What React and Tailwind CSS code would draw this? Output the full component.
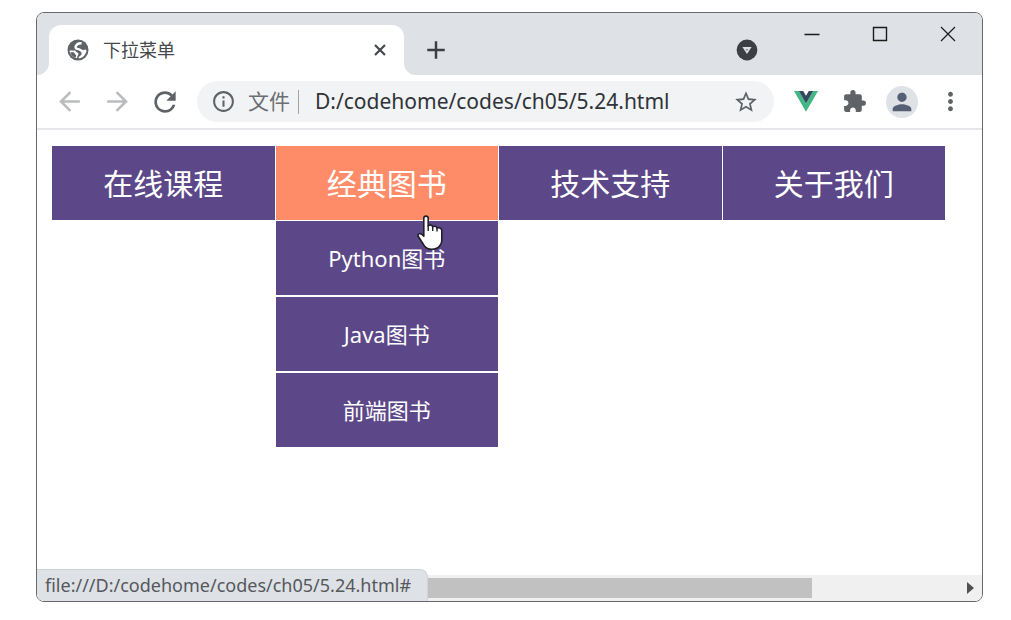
import React from "react";
import {
  MdAdd,
  MdArrowBack,
  MdArrowForward,
  MdExtension,
  MdInfoOutline,
  MdMoreVert,
  MdPerson,
  MdRefresh,
  MdStarBorder,
} from "react-icons/md";

const menu = [
  { label: "在线课程" },
  { label: "经典图书", active: true, children: ["Python图书", "Java图书", "前端图书"] },
  { label: "技术支持" },
  { label: "关于我们" },
];

function IconButton({ label, children, className = "" }) {
  return (
    <button
      type="button"
      aria-label={label}
      className={`flex size-8 shrink-0 items-center justify-center rounded-full text-[#5f6368] ${className}`}
    >
      {children}
    </button>
  );
}

function CaptionButton({ label, children }) {
  return (
    <button type="button" aria-label={label} className="flex h-[42px] w-17 items-center justify-center text-[#1b1b1b]">
      <svg viewBox="0 0 16 16" className="size-4" fill="none" stroke="currentColor" aria-hidden="true">
        {children}
      </svg>
    </button>
  );
}

function GlobeIcon() {
  return (
    <svg viewBox="0 0 22 22" className="size-[22px] shrink-0" aria-hidden="true">
      <circle cx="11" cy="11" r="10.5" fill="#5f6368" />
      <path
        d="M14.6 4.200C11.500 4 9.400 5.200 8.600 7.600c-.4 1.800 1 2.300 2.800 2.500 2 .2 2.400 1.900 4.300 2 1.300.1 2.200 0 3.500-.4"
        fill="none"
        stroke="#fff"
        strokeWidth="2.400"
      />
      <path d="M16.800 12c.8 0 1.700-.2 2.600-.500-.2 3.200-2.200 5.900-4.900 7.200-.9.400-2 .6-3 .6.300-1.700 1-2.300 2.500-3 .9-.6.700-2 0-2.700z" fill="#fff" />
      <path d="M2.600 11.600h5c1.200.2 1.400 1.700 2.600 2 1.200.3 1.600 1.300.9 2.400-.7 1-1 2-1.100 3.200C5.800 18.600 2.700 15.600 2.600 11.600z" fill="#fff" />
      <path d="M3.200 13.200h3.600c1 .8 1 2.200 2.400 3l-.6 2.600C5.800 18 3.900 15.900 3.200 13.200z" fill="#5f6368" />
    </svg>
  );
}

function TabStrip() {
  return (
    <div className="flex h-[62px] bg-[#dee1e6]">
      <div className="flex w-3 shrink-0 flex-col justify-end">
        <div className="bg-white">
          <div className="h-3 rounded-br-xl bg-[#dee1e6]" />
        </div>
      </div>
      <div className="mt-3 flex w-[355px] items-center rounded-t-xl bg-white pr-3 pl-[18px]">
        <GlobeIcon />
        <span className="ml-[14px] flex-1 text-[18px] text-[#45494d]">下拉菜单</span>
        <button type="button" aria-label="关闭标签页" className="flex size-6 items-center justify-center text-[#45494d]">
          <svg viewBox="0 0 12 12" className="size-3" aria-hidden="true">
            <path d="M1 1l10 10M11 1L1 11" fill="none" stroke="currentColor" strokeWidth="2.200" />
          </svg>
        </button>
      </div>
      <div className="flex w-3 shrink-0 flex-col justify-end">
        <div className="bg-white">
          <div className="h-3 rounded-bl-xl bg-[#dee1e6]" />
        </div>
      </div>
      <button type="button" aria-label="新标签页" className="mt-[21px] ml-1 flex size-8 items-center justify-center text-[#3c4043]">
        <MdAdd size={30} />
      </button>
      <div className="ml-auto flex">
        <button type="button" aria-label="搜索标签页" className="mt-[21px] mr-[15px] flex size-8 items-center justify-center">
          <svg viewBox="0 0 22 22" className="size-[22px]" aria-hidden="true">
            <circle cx="11" cy="11" r="10.400" fill="#3c4043" />
            <path d="M6.400 8h9.200L11 15z" fill="#dee1e6" />
            <path d="M9.600 10h2.800L11 12.200z" fill="#8a8d91" />
          </svg>
        </button>
        <CaptionButton label="最小化">
          <path d="M.5 8.500h15" strokeWidth="1.400" />
        </CaptionButton>
        <CaptionButton label="最大化">
          <path d="M1.500 1.500h13v13h-13z" strokeWidth="1.400" />
        </CaptionButton>
        <CaptionButton label="关闭">
          <path d="M1 1l14 14M15 1L1 15" strokeWidth="1.200" />
        </CaptionButton>
      </div>
    </div>
  );
}

function Toolbar() {
  return (
    <div className="flex h-[55px] items-center gap-4 border-b-2 border-[#e6e7ea] px-4">
      <IconButton label="后退">
        <MdArrowBack size={31} className="text-[#babcbe]" />
      </IconButton>
      <IconButton label="前进">
        <MdArrowForward size={31} className="text-[#babcbe]" />
      </IconButton>
      <IconButton label="重新加载">
        <MdRefresh size={32} />
      </IconButton>
      <div className="flex h-[41px] min-w-0 flex-1 items-center rounded-full bg-[#f1f3f4] pr-3 pl-[14px]">
        <MdInfoOutline size={25} className="shrink-0 text-[#5f6368]" aria-hidden="true" />
        <label htmlFor="address" className="ml-3 shrink-0 text-[21px] text-[#6b6f73]">
          文件
        </label>
        <span className="mx-2 h-6 w-px bg-[#a0a3a7]" />
        <input
          id="address"
          type="text"
          defaultValue="D:/codehome/codes/ch05/5.24.html"
          className="ml-2 min-w-0 flex-1 bg-transparent text-[21px] text-[#303338] outline-none"
        />
        <button type="button" aria-label="添加书签" className="flex size-8 items-center justify-center text-[#5f6368]">
          <MdStarBorder size={26} />
        </button>
      </div>
      <IconButton label="Vue.js devtools">
        <svg viewBox="0 0 24 21" className="h-[21px] w-6" aria-hidden="true">
          <path d="M0 0h4.800L12 12.400 19.200 0H24L12 20.800z" fill="#41b883" />
          <path d="M4.800 0h4.400L12 4.800 14.800 0h4.400L12 12.400z" fill="#34495e" />
        </svg>
      </IconButton>
      <IconButton label="扩展程序">
        <MdExtension size={25} />
      </IconButton>
      <IconButton label="个人资料" className="bg-[#dee1e6]">
        <MdPerson size={28} className="text-[#566074]" />
      </IconButton>
      <IconButton label="更多">
        <MdMoreVert size={29} />
      </IconButton>
    </div>
  );
}

function PointerCursor() {
  return (
    <svg
      viewBox="0 0 26 36"
      className="pointer-events-none absolute top-[69px] left-[141px] z-10 h-9 w-[26px]"
      aria-hidden="true"
    >
      <path
        d="M6.800 3.400C6.800.4 11.200.4 11.200 3.400V11c1-1.500 4.200-1.200 4.500.8 1.300-1.200 4-.5 4.300 1.300 1.600-1 4.800 0 4.800 2.300v10c0 2-.7 3.400-1.700 4.800-1.900 2.900-4.700 4.100-8.300 4.100-3.300 0-5.700-1.200-7.500-3.600L1.200 21.300c-1-2.200 1.600-3.500 3.400-2.100l2.200 2z"
        fill="#fff"
        stroke="#20202c"
        strokeWidth="1.600"
        strokeLinejoin="round"
      />
      <path d="M11.200 10v6M15.700 11.800v4.200M20 13.100v3.400" stroke="#20202c" strokeWidth="1.400" />
    </svg>
  );
}

function MenuItem({ item }) {
  return (
    <li className="relative">
      <a
        href="#"
        className={`flex h-[74px] items-center justify-center text-[30px] text-white ${item.active ? "bg-[#ff8c69]" : "bg-[#5c4888]"}`}
      >
        {item.label}
      </a>
      {item.children && (
        <ul className="absolute inset-x-0 top-full mt-px grid gap-[2px]">
          {item.children.map((child) => (
            <li key={child}>
              <a href="#" className="flex h-[74px] items-center justify-center bg-[#5c4888] text-[22px] text-white">
                {child}
              </a>
            </li>
          ))}
        </ul>
      )}
      {item.active && <PointerCursor />}
    </li>
  );
}

export default function App() {
  return (
    <div className="flex min-h-screen bg-white pt-3 pr-7 pb-[18px] pl-9 font-['Noto_Sans','Noto_Sans_CJK_SC',sans-serif]">
      <div className="relative flex min-w-0 flex-1 flex-col overflow-hidden rounded-lg border border-[#66686b] bg-white">
        <TabStrip />
        <Toolbar />
        <main className="flex-1 pt-4 pr-[37px] pl-[15px]">
          <nav>
            <ul className="grid grid-cols-4 gap-px">
              {menu.map((item) => (
                <MenuItem key={item.label} item={item} />
              ))}
            </ul>
          </nav>
        </main>
        <div className="flex h-[26px] items-center bg-[#f0f0f0] pr-2 pl-9">
          <div className="h-5 w-[82%] bg-[#c1c1c1]" />
          <svg viewBox="0 0 7 12" className="ml-auto h-3 w-[7px]" aria-hidden="true">
            <path d="M0 0l7 6-7 6z" fill="#505050" />
          </svg>
        </div>
        <div className="absolute bottom-0 left-0 flex h-8 items-center rounded-tr-lg border-t border-r border-[#d0d3d8] bg-[#dee1e6] pr-4 pl-2 text-[18px] text-[#55585c]">
          file:///D:/codehome/codes/ch05/5.24.html#
        </div>
      </div>
    </div>
  );
}
